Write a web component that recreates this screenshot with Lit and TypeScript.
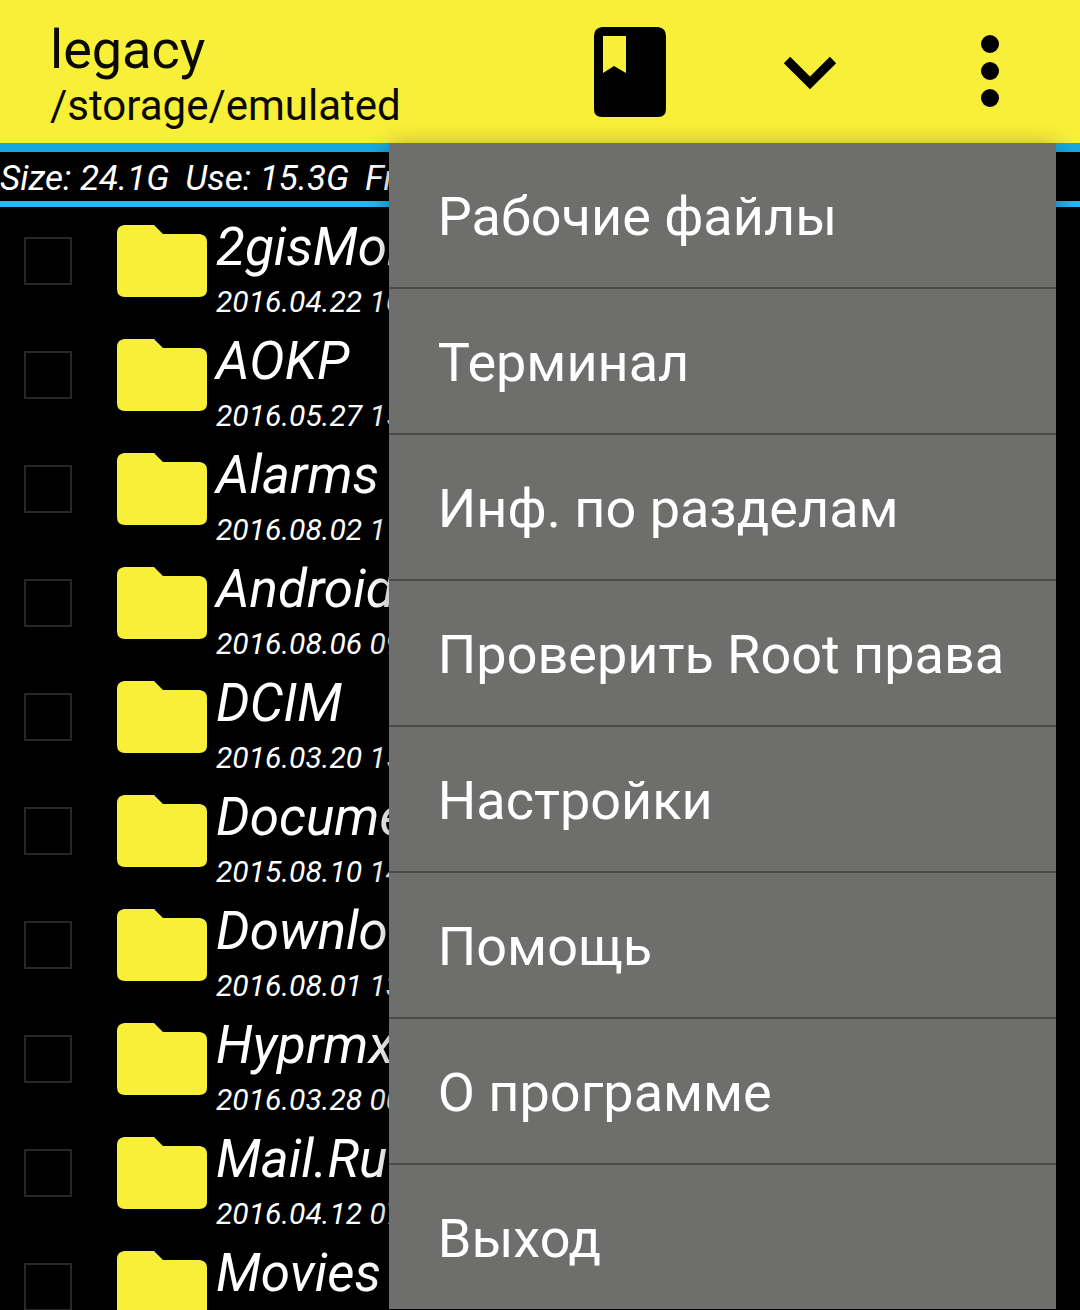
import { LitElement, html, css } from "lit";
import { customElement, property, state } from "lit/decorators.js";

interface FileEntry {
  name: string;
  date: string;
}

const ENTRIES: FileEntry[] = [
  { name: "2gisMob", date: "2016.04.22 16" },
  { name: "AOKP", date: "2016.05.27 15" },
  { name: "Alarms", date: "2016.08.02 11" },
  { name: "Android", date: "2016.08.06 09" },
  { name: "DCIM", date: "2016.03.20 15" },
  { name: "Docume", date: "2015.08.10 14" },
  { name: "Downlo", date: "2016.08.01 13" },
  { name: "Hyprmx", date: "2016.03.28 00" },
  { name: "Mail.Ru", date: "2016.04.12 07" },
  { name: "Movies", date: "" },
];

const MENU = [
  "Рабочие файлы",
  "Терминал",
  "Инф. по разделам",
  "Проверить Root права",
  "Настройки",
  "Помощь",
  "О программе",
  "Выход",
];

@customElement("file-row")
class FileRow extends LitElement {
  @property({ attribute: false }) entry!: FileEntry;

  static styles = css`
    :host {
      display: block;
      height: 114px;
    }
    .row {
      display: flex;
      align-items: flex-start;
      height: 100%;
    }
    .check {
      appearance: none;
      flex: none;
      box-sizing: border-box;
      width: 48px;
      height: 48px;
      margin: 30px 44px 0 24px;
      border: 2px solid #272727;
      background: #000;
    }
    .check:checked {
      background: #f8ef38;
    }
    .folder {
      flex: none;
      width: 92px;
      height: 74px;
      margin-top: 17px;
    }
    .label {
      display: flex;
      flex-direction: column;
      padding: 8px 0 0 8px;
      font-style: italic;
      white-space: nowrap;
    }
    .name {
      font-size: 53px;
      line-height: 64px;
    }
    .date {
      font-size: 30px;
      line-height: 46px;
    }
  `;

  render() {
    return html`
      <label class="row">
        <input class="check" type="checkbox" />
        <svg class="folder" viewBox="0 0 92 74" aria-hidden="true">
          <path
            d="M8 1H38L47 10H84Q91 11 91 18V66Q91 73 83 73H9Q1 73 1 65V9Q1 2 8 1Z"
            fill="#f8ef38"
          />
        </svg>
        <span class="label">
          <span class="name">${this.entry.name}</span>
          <span class="date">${this.entry.date}</span>
        </span>
      </label>
    `;
  }
}

@customElement("app-root")
class AppRoot extends LitElement {
  @state() private menuOpen = true;

  static styles = css`
    :host {
      display: flex;
      flex-direction: column;
      position: relative;
      height: 100vh;
      overflow: hidden;
      background: #000;
      color: #fff;
      font-family: Roboto, "Noto Sans", sans-serif;
    }
    .bar {
      flex: none;
      display: flex;
      align-items: center;
      height: 143px;
      background: #f8ef38;
      color: #0a0a00;
    }
    .titles {
      flex: 1;
      min-width: 0;
      padding: 4px 0 0 50px;
      white-space: nowrap;
    }
    .title {
      margin: 0;
      font-size: 54px;
      font-weight: 400;
      line-height: 64px;
    }
    .path {
      margin: 0;
      font-size: 42px;
      line-height: 48px;
    }
    .action {
      flex: none;
      display: grid;
      place-items: center;
      width: 180px;
      height: 143px;
      padding: 0;
      border: 0;
      background: none;
      color: #000;
    }
    .icon {
      width: 108px;
      height: 108px;
    }
    .stats {
      flex: none;
      display: flex;
      gap: 16px;
      border-top: 9px solid #18a8e0;
      border-bottom: 6px solid #25b9f8;
      padding: 4px 0 0;
      font-size: 35px;
      font-style: italic;
      line-height: 45px;
      white-space: nowrap;
    }
    .files {
      list-style: none;
      margin: 0;
      padding: 0;
    }
    .menu {
      position: absolute;
      top: 143px;
      left: 36%;
      right: 24px;
      background: #6e6e6c;
      box-shadow: 0 6px 24px rgba(0, 0, 0, 0.4);
    }
    .item {
      display: block;
      box-sizing: border-box;
      width: 100%;
      height: 146px;
      padding: 4px 0 0 49px;
      border: 0;
      border-bottom: 2px solid #4b4b4a;
      background: none;
      color: #fff;
      font: 400 54px/64px Roboto, "Noto Sans", sans-serif;
      text-align: left;
      white-space: nowrap;
    }
    .item:last-child {
      height: 144px;
      border-bottom: 0;
    }
  `;

  render() {
    return html`
      <header class="bar">
        <div class="titles">
          <h1 class="title">legacy</h1>
          <p class="path">/storage/emulated</p>
        </div>
        <button class="action" aria-label="Закладки">
          <svg class="icon" viewBox="0 0 108 108" fill="currentColor">
            <path
              fill-rule="evenodd"
              d="M26 9H82Q90 10 90 18V91Q90 99 82 99H26Q18 99 18 91V18Q18 10 26 9ZM27 18V55L38 48L50 55V18Z"
            />
          </svg>
        </button>
        <button class="action" aria-label="Развернуть">
          <svg class="icon" viewBox="0 0 108 108" fill="none" stroke="currentColor">
            <path d="M31 42L54 65L77 42" stroke-width="9" />
          </svg>
        </button>
        <button
          class="action"
          aria-label="Меню"
          aria-expanded=${this.menuOpen}
          @click=${() => (this.menuOpen = !this.menuOpen)}
        >
          <svg class="icon" viewBox="0 0 108 108" fill="currentColor">
            <circle cx="54" cy="26" r="9" />
            <circle cx="54" cy="53" r="9" />
            <circle cx="54" cy="80" r="9" />
          </svg>
        </button>
      </header>
      <div class="stats">
        <span>Size: 24.1G</span><span>Use: 15.3G</span><span>Fr</span>
      </div>
      <ul class="files">
        ${ENTRIES.map((e) => html`<li><file-row .entry=${e}></file-row></li>`)}
      </ul>
      ${this.menuOpen
        ? html`<div class="menu" role="menu">
            ${MENU.map((m) => html`<button class="item" role="menuitem">${m}</button>`)}
          </div>`
        : null}
    `;
  }
}
